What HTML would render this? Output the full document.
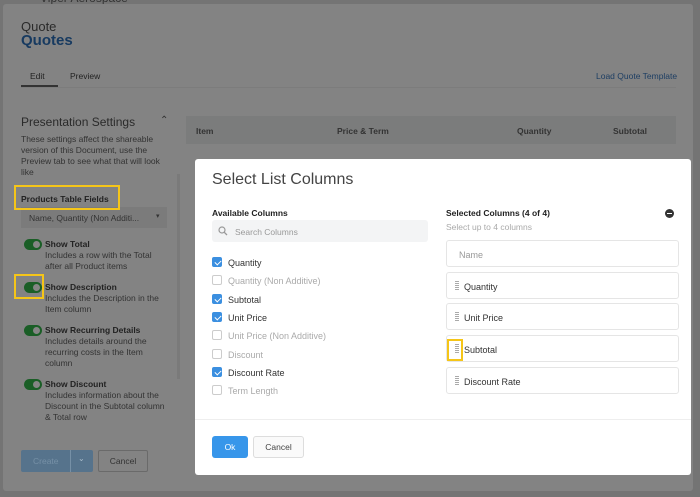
<!DOCTYPE html>
<html><head><style>
*{box-sizing:border-box;margin:0;padding:0}
body{width:700px;height:497px;overflow:hidden;background:#747474;font-family:"Liberation Sans",sans-serif;position:relative}
.panel{position:absolute;left:3px;top:4px;width:690px;height:487px;background:#838383;border-radius:3px}
.a{position:absolute;white-space:nowrap}
.t{color:#333}
.tog{position:absolute;left:21px;width:18px;height:11px;border-radius:6px;background:#1a5e26}
.tog:after{content:"";position:absolute;right:2px;top:2px;width:7px;height:7px;border-radius:50%;background:#858585}
.hl{position:absolute;border:2px solid #f5c518}
.modal{position:absolute;left:195px;top:159px;width:496px;height:316px;background:#fff;border-radius:3px}
.cb{position:absolute;left:17px;width:10px;height:10px;border-radius:2px;border:1px solid #ccc}
.cb.on{background:#3b8fe0;border-color:#3b8fe0}
.cb.on:after{content:"";position:absolute;left:2.5px;top:0.5px;width:3px;height:5px;border:solid #fff;border-width:0 1.5px 1.5px 0;transform:rotate(45deg)}
.lbl{position:absolute;left:33px;font-size:9px;color:#333}
.lbl.g{color:#aaa}
.box{position:absolute;left:251px;width:233px;height:27px;border:1px solid #e5e5e5;border-radius:3px;font-size:9px;color:#333;padding:9px 0 0 17px}
.grip{position:absolute;left:8px;top:8px;width:4px;height:10px;background:repeating-linear-gradient(#aaa 0 1px,#fff 1px 2px)}
</style></head><body>
<div class="a" style="left:40px;top:-9px;font-size:12px;color:#333">Viper Aerospace</div>
<div class="panel">
<div class="a" style="left:18px;top:15px;font-size:13px;color:#2a2a2a">Quote</div>
<div class="a" style="left:18px;top:28px;font-size:15px;font-weight:bold;color:#173a60">Quotes</div>
<div class="a" style="left:27px;top:67px;font-size:8.5px;color:#222">Edit</div>
<div class="a" style="left:67px;top:67px;font-size:8.5px;color:#222">Preview</div>
<div class="a" style="left:18px;top:81px;width:37px;height:2px;background:#333"></div>
<div class="a" style="left:18px;top:83px;width:655px;height:1px;background:#7c7c7c"></div>
<div class="a" style="left:593px;top:67px;font-size:8.5px;color:#1d3e63">Load Quote Template</div>
<div class="a" style="left:18px;top:111px;font-size:12px;color:#2a2a2a">Presentation Settings</div>
<div class="a" style="left:157px;top:111px;font-size:10px;color:#333">&#8963;</div>
<div class="a t" style="left:18px;top:130px;font-size:8.5px;line-height:11px;white-space:normal;width:145px">These settings affect the shareable version of this Document, use the Preview tab to see what that will look like</div>
<div class="a" style="left:183px;top:112px;width:490px;height:28px;background:#7b7c7c"></div>
<div class="a t" style="left:193px;top:122px;font-size:8.5px;font-weight:bold">Item</div>
<div class="a t" style="left:334px;top:122px;font-size:8.5px;font-weight:bold">Price &amp; Term</div>
<div class="a t" style="left:514px;top:122px;font-size:8.5px;font-weight:bold">Quantity</div>
<div class="a t" style="left:610px;top:122px;font-size:8.5px;font-weight:bold">Subtotal</div>
<div class="a" style="left:174px;top:170px;width:3px;height:205px;background:#7a7a7a"></div>
<div class="a t" style="left:18px;top:190px;font-size:8.5px;font-weight:bold;color:#222">Products Table Fields</div>
<div class="a" style="left:18px;top:203px;width:146px;height:21px;background:#7b7b7b"></div>
<div class="a t" style="left:26px;top:209px;font-size:8.5px">Name, Quantity (Non Additi...</div>
<div class="a t" style="left:153px;top:208px;font-size:7px">&#9662;</div>
<div class="tog" style="top:235px"></div>
<div class="a t" style="left:42px;top:235px;font-size:8.5px;font-weight:bold;color:#222">Show Total</div>
<div class="a t" style="left:42px;top:246px;font-size:8.5px;line-height:11px">Includes a row with the Total<br>after all Product items</div>
<div class="tog" style="top:278px"></div>
<div class="a t" style="left:42px;top:278px;font-size:8.5px;font-weight:bold;color:#222">Show Description</div>
<div class="a t" style="left:42px;top:289px;font-size:8.5px;line-height:11px">Includes the Description in the<br>Item column</div>
<div class="tog" style="top:321px"></div>
<div class="a t" style="left:42px;top:321px;font-size:8.5px;font-weight:bold;color:#222">Show Recurring Details</div>
<div class="a t" style="left:42px;top:332px;font-size:8.5px;line-height:11px">Includes details around the<br>recurring costs in the Item<br>column</div>
<div class="tog" style="top:375px"></div>
<div class="a t" style="left:42px;top:375px;font-size:8.5px;font-weight:bold;color:#222">Show Discount</div>
<div class="a t" style="left:42px;top:386px;font-size:8.5px;line-height:11px">Includes information about the<br>Discount in the Subtotal column<br>&amp; Total row</div>
<div class="a" style="left:18px;top:446px;width:72px;height:22px;background:#56738c;border-radius:2px"></div>
<div class="a" style="left:30px;top:452px;font-size:8.5px;color:#7690a6">Create</div>
<div class="a" style="left:67px;top:446px;width:1px;height:22px;background:#7690a6"></div>
<div class="a" style="left:75px;top:450px;font-size:8px;color:#a8bccb">&#8964;</div>
<div class="a" style="left:95px;top:446px;width:50px;height:22px;border:1px solid #6a6a6a;border-radius:2px;font-size:8.5px;color:#333;text-align:center;line-height:20px">Cancel</div>
</div>
<div class="hl" style="left:14px;top:185px;width:106px;height:25px"></div>
<div class="hl" style="left:14px;top:274px;width:30px;height:25px"></div>
<div class="modal">
<div class="a" style="left:17px;top:12px;font-size:16px;color:#444">Select List Columns</div>
<div class="a" style="left:17px;top:49px;font-size:8.5px;font-weight:bold;color:#222">Available Columns</div>
<div class="a" style="left:17px;top:61px;width:216px;height:22px;background:#f3f4f5;border-radius:3px"></div>
<svg class="a" style="left:23px;top:67px" width="10" height="10" viewBox="0 0 10 10"><circle cx="4" cy="4" r="3" stroke="#999" stroke-width="1.2" fill="none"/><path d="M6.3 6.3 9 9" stroke="#999" stroke-width="1.3"/></svg>
<div class="a" style="left:40px;top:68px;font-size:8.5px;color:#999">Search Columns</div>
<div class="cb on" style="top:98px"></div><div class="lbl" style="top:99px">Quantity</div>
<div class="cb" style="top:116px"></div><div class="lbl g" style="top:117px">Quantity (Non Additive)</div>
<div class="cb on" style="top:135px"></div><div class="lbl" style="top:136px">Subtotal</div>
<div class="cb on" style="top:153px"></div><div class="lbl" style="top:154px">Unit Price</div>
<div class="cb" style="top:171px"></div><div class="lbl g" style="top:172px">Unit Price (Non Additive)</div>
<div class="cb" style="top:190px"></div><div class="lbl g" style="top:191px">Discount</div>
<div class="cb on" style="top:208px"></div><div class="lbl" style="top:209px">Discount Rate</div>
<div class="cb" style="top:226px"></div><div class="lbl g" style="top:227px">Term Length</div>
<div class="a" style="left:251px;top:49px;font-size:8.5px;font-weight:bold;color:#222">Selected Columns (4 of 4)</div>
<div class="a" style="left:251px;top:63px;font-size:8.5px;color:#aaa">Select up to 4 columns</div>
<div class="a" style="left:470px;top:50px;width:9px;height:9px;border-radius:50%;background:#333"><div style="position:absolute;left:2px;top:4px;width:5px;height:1.3px;background:#fff"></div></div>
<div class="box" style="top:81px;color:#999;padding-left:12px">Name</div>
<div class="box" style="top:113px"><div class="grip"></div>Quantity</div>
<div class="box" style="top:144px"><div class="grip"></div>Unit Price</div>
<div class="box" style="top:176px"><div class="grip"></div>Subtotal</div>
<div class="box" style="top:208px"><div class="grip"></div>Discount Rate</div>
<div class="hl" style="left:252px;top:180px;width:16px;height:22px"></div>
<div class="a" style="left:0;top:260px;width:496px;height:1px;background:#eee"></div>
<div class="a" style="left:17px;top:277px;width:36px;height:22px;background:#3796ea;border-radius:3px;color:#fff;font-size:8.5px;text-align:center;line-height:22px">Ok</div>
<div class="a" style="left:58px;top:277px;width:51px;height:22px;border:1px solid #ddd;background:#fafafa;border-radius:3px;color:#444;font-size:8.5px;text-align:center;line-height:20px">Cancel</div>
</div>
</body></html>
